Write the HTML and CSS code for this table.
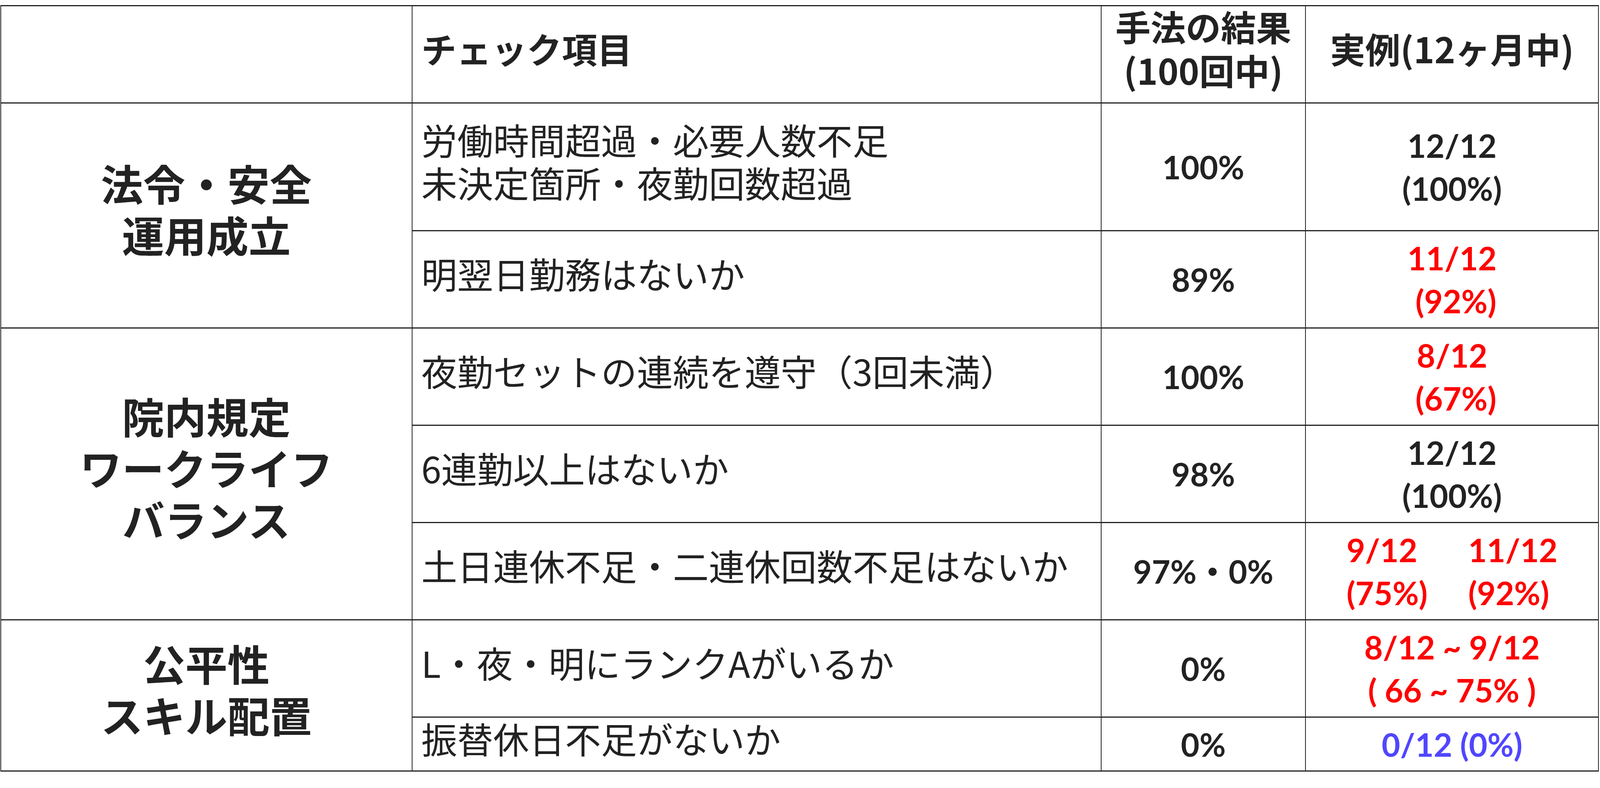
FILE: index.html
```html
<!DOCTYPE html>
<html lang="ja">
<head>
<meta charset="utf-8">
<title>チェック項目</title>
<link rel="stylesheet" href="styles.css">
</head>
<body>
<table class="grid">
  <colgroup>
    <col class="c-group">
    <col class="c-item">
    <col class="c-result">
    <col class="c-actual">
  </colgroup>
  <thead>
    <tr class="r-head">
      <th class="h-blank"></th>
      <th class="h-item">チェック項目</th>
      <th class="h-num"><span class="stack">手法の結果<br>(100回中)</span></th>
      <th class="h-one">実例(12ヶ月中)</th>
    </tr>
  </thead>
  <tbody>
    <tr class="r-tall">
      <td class="group" rowspan="2">法令・安全<br>運用成立</td>
      <td class="item">労働時間超過・必要人数不足<br>未決定箇所・夜勤回数超過</td>
      <td class="num">100%</td>
      <td class="num">12/12<br>(100%)</td>
    </tr>
    <tr class="r-std">
      <td class="item">明翌日勤務はないか</td>
      <td class="num">89%</td>
      <td class="num red">11/12<br>&nbsp;(92%)</td>
    </tr>
    <tr class="r-std">
      <td class="group" rowspan="3">院内規定<br>ワークライフ<br>バランス</td>
      <td class="item">夜勤セットの連続を遵守（3回未満）</td>
      <td class="num">100%</td>
      <td class="num red">8/12<br>&nbsp;(67%)</td>
    </tr>
    <tr class="r-std">
      <td class="item">6連勤以上はないか</td>
      <td class="num">98%</td>
      <td class="num">12/12<br>(100%)</td>
    </tr>
    <tr class="r-std">
      <td class="item">土日連休不足・二連休回数不足はないか</td>
      <td class="num">97%・0%</td>
      <td class="num red"><div class="pair"><span class="pair-col">9/12<br>(75%)</span><span class="pair-col">11/12<br>(92%)</span></div></td>
    </tr>
    <tr class="r-std">
      <td class="group" rowspan="2">公平性<br>スキル配置</td>
      <td class="item">L・夜・明にランクAがいるか</td>
      <td class="num">0%</td>
      <td class="num red">8/12 ~ 9/12<br>(&nbsp;66 ~ 75%&nbsp;)</td>
    </tr>
    <tr class="r-short">
      <td class="item">振替休日不足がないか</td>
      <td class="num">0%</td>
      <td class="num blue">0/12 (0%)</td>
    </tr>
  </tbody>
</table>
</body>
</html>
```

FILE: styles.css
```css
html, body {
  margin: 0;
  padding: 0;
  background: #ffffff;
}

.grid {
  border-collapse: collapse;
  table-layout: fixed;
  width: calc(100% - 4px);
  margin: 13px 0 0 1px;
  color: #222222;
  font-family: "Noto Sans CJK JP", "Noto Sans", sans-serif;
}

.c-group { width: 25.735%; }
.c-item { width: 43.130%; }
.c-result { width: 12.808%; }
.c-actual { width: 18.327%; }

th,
td {
  border-left: 2px solid #222222;
  border-right: 2px solid #222222;
  border-top: 3px solid #222222;
  border-bottom: 3px solid #222222;
  padding: 0;
  vertical-align: middle;
}

.r-head { height: 249px; }
.r-tall { height: 327px; }
.r-std { height: 249px; }
.r-short { height: 138px; }

/* header */
.h-item,
.h-num,
.h-one {
  font-size: 90px;
  font-weight: 700;
  line-height: 110px;
}

.h-item {
  text-align: left;
  padding: 0 0 32px 23px;
}

.h-one {
  text-align: center;
  padding-bottom: 32px;
}

.h-num {
  text-align: center;
  line-height: 112px;
}

.h-num .stack {
  display: block;
  margin-top: -34px;
}

/* group labels */
.group {
  font-size: 108px;
  font-weight: 700;
  line-height: 132px;
  text-align: center;
  padding-bottom: 37px;
}

/* check items */
.item {
  font-size: 92px;
  font-weight: 400;
  line-height: 110px;
  text-align: left;
  padding: 0 0 32px 23px;
}

.r-short .item {
  line-height: 80px;
}

/* numbers */
.num {
  font-family: Lato, "Noto Sans CJK JP", sans-serif;
  font-size: 82px;
  font-weight: 700;
  line-height: 110px;
  text-align: center;
}

.red { color: #ff0000; }
.blue { color: #5046ff; }

.pair {
  display: flex;
  justify-content: center;
  gap: 104px;
  text-align: left;
}

.pair-col {
  display: block;
}
```
